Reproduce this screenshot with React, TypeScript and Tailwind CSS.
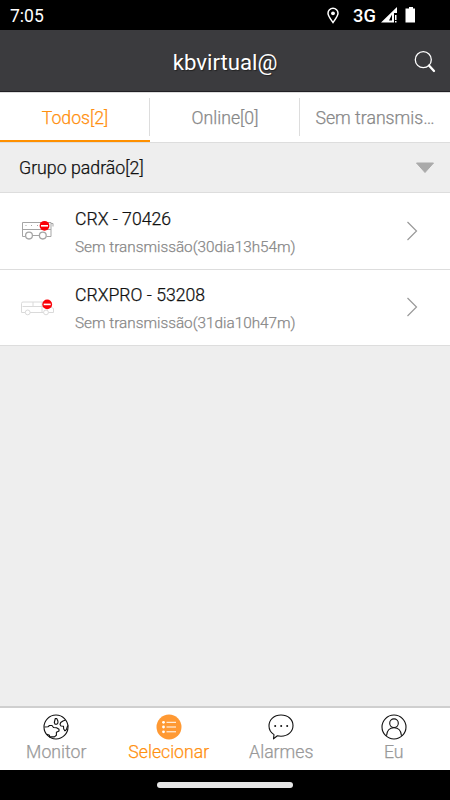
import React from 'react';

const NoEntry = ({ cx, cy }: { cx: number; cy: number }) => (
  <g stroke="none">
    <circle cx={cx} cy={cy} r="4.9" fill="#fa0008" />
    <rect x={cx - 3.5} y={cy - 0.8} width="7" height="1.6" fill="#fff" />
  </g>
);

const BusIcon = () => (
  <svg width="36" height="24" viewBox="0 0 36 24" fill="none" stroke="#a5a5a5">
    <path d="M5.500 17.500H2.500V3.500h28.500v14h-4.500M19.500 16.500H12.500M2.500 10.500h28.500M31 4.500h2v3" />
    <path d="M5.500 6.500h1M11 6.500h1M17 6.500h1" />
    <circle cx="9" cy="16.600" r="3.400" fill="#fff" strokeWidth="1.300" />
    <circle cx="22.800" cy="16.600" r="3.400" fill="#fff" strokeWidth="1.300" />
    <NoEntry cx={24.5} cy={6.8} />
  </svg>
);

const VanIcon = () => (
  <svg width="36" height="24" viewBox="0 0 36 24" fill="none" stroke="#dadada">
    <path d="M1.500 16.500V7.500q0-1.500 1.500-1.500H27l3.500 5 3 1.500v4H1.500zM2.500 10.500h26M13 6v4.500M22 6v10.500" />
    <circle cx="7.700" cy="16.400" r="2.400" fill="#fff" />
    <circle cx="26" cy="16.400" r="2.400" fill="#fff" />
    <NoEntry cx={27.2} cy={8.4} />
  </svg>
);

const devices = [
  { name: 'CRX - 70426', status: 'Sem transmissão(30dia13h54m)', icon: <BusIcon /> },
  { name: 'CRXPRO - 53208', status: 'Sem transmissão(31dia10h47m)', icon: <VanIcon /> },
];

const Globe = () => (
  <svg width="26" height="26" viewBox="0 0 26 26" fill="none" stroke="#111" strokeWidth="1.1" strokeLinejoin="round">
    <circle cx="13" cy="13" r="12" />
    <path d="M1.500 13l3.500-.3 1.500-1.200 2.500 0 1.500 2 3 .2 2.500 1.600v1.700l-2.600 1.300v3l-2 1.600H6.500v-1.600L4 20.300M12.300 4.500h1.400l1.200 2.500v2l-1 1.200h-1.800l-.8-1.700zM22.500 6l-2.500 1-2.300 1.500-.7 2 1 1.500 2.500.3.200 2.700 1.200 1.800 1.600-1.500.7-2.500 1-1.300" />
  </svg>
);

const ListCircle = () => (
  <svg width="26" height="26" viewBox="0 0 26 26">
    <circle cx="13" cy="13" r="12.500" fill="#ff9933" />
    <g fill="#fff">
      <circle cx="7.500" cy="8.300" r="1.400" />
      <circle cx="7.500" cy="13" r="1.400" />
      <circle cx="7.500" cy="17.800" r="1.400" />
    </g>
    <path d="M10.500 8.300h9.500M10.500 13h9.500M10.500 17.800h9.500" stroke="#fff" strokeWidth="1" />
  </svg>
);

const Bubble = () => (
  <svg width="26" height="26" viewBox="0 0 26 26" fill="none" stroke="#111" strokeWidth="1.1" strokeLinejoin="round">
    <path d="M6 20.600C2.700 18.500 1 15.500 1 12 1 5.500 6 1 13 1s12 4.500 12 10.600-5 10.600-12 10.600c-1.300 0-2.500-.1-3.600-.4L5.500 24.800z" />
    <g fill="#111" stroke="none">
      <circle cx="7.200" cy="12" r="1" />
      <circle cx="13.200" cy="12" r="1" />
      <circle cx="19.200" cy="12" r="1" />
    </g>
  </svg>
);

const Person = () => (
  <svg width="26" height="26" viewBox="0 0 26 26" fill="none" stroke="#111" strokeWidth="1.1">
    <circle cx="13" cy="13" r="12" />
    <circle cx="13" cy="9.200" r="4.300" />
    <path d="M5.500 21.800c.4-5 3.400-8 7.500-8s7.100 3 7.500 8" />
  </svg>
);

const nav = [
  { label: 'Monitor', icon: <Globe />, active: false },
  { label: 'Selecionar', icon: <ListCircle />, active: true },
  { label: 'Alarmes', icon: <Bubble />, active: false },
  { label: 'Eu', icon: <Person />, active: false },
];

export default function App() {
  return (
    <div className="flex h-[800px] w-[450px] flex-col overflow-hidden bg-[#eeeeee] font-['Roboto',sans-serif]">
      <div className="flex h-[30px] shrink-0 items-center justify-between bg-black pl-[10px] text-white">
        <span className="pt-px text-[17.5px] leading-[30px]">7:05</span>
        <div className="flex h-full items-center">
          <svg width="12" height="17" viewBox="0 0 12 17" fill="none" stroke="#fff" strokeWidth="1.500">
            <path d="M6 15.500C3.500 12 1 9 1 6.300a5 5 0 0 1 10 0C11 9 8.500 12 6 15.500z" />
            <circle cx="6" cy="6.300" r="1.900" fill="#fff" stroke="none" />
          </svg>
          <span className="ml-[14px] w-[27px] pt-px text-[18.3px] leading-[30px] font-medium">3G</span>
          <svg width="36" height="17" viewBox="0 0 36 17" fill="#fff" className="mr-[34px]">
            <path fillRule="evenodd" d="M1 15.500L17 0v6h-3v9.500zM9 13.500h3V7.500z" />
            <path d="M15 8h1.500v5H15zM15 14h1.500v1.500H15zM27 1.500h2V0h4v1.500h2v14H25.500v-14z" />
          </svg>
        </div>
      </div>

      <header className="grid h-[62px] shrink-0 grid-cols-[50px_1fr_50px] items-center border-b border-[#211f24] bg-[#3b3b3e] text-white">
        <h1 className="col-start-2 pt-[3px] text-center text-[22.2px] leading-[30px] [text-shadow:1px_1px_1px_#222]">kbvirtual@</h1>
        <svg width="22" height="22" viewBox="0 0 22 22" fill="none" stroke="#fff" className="ml-[14px] mt-[3px]">
          <circle cx="9.300" cy="8.700" r="8" strokeWidth="1.300" />
          <path d="M15 14.500l5 5.500" strokeWidth="2.300" strokeLinecap="round" />
        </svg>
      </header>

      <div className="grid h-[51px] shrink-0 grid-cols-3 grid-rows-[49px] border-t border-b border-[#dddddd] bg-white text-center text-[17.7px] leading-[51px] font-light text-[#888888] [-webkit-text-stroke:0.25px]">
        <div className="flex border-b-2 border-[#ff9000] text-[#ff9010]">
          <span className="flex-1 pl-px">Todos[2]</span>
          <i className="mt-[5px] h-[38px] w-px bg-[#dddddd]" />
        </div>
        <div className="flex">
          <span className="flex-1 pl-px">Online[0]</span>
          <i className="mt-[5px] h-[38px] w-px bg-[#dddddd]" />
        </div>
        <div>Sem transmis…</div>
      </div>

      <div className="flex h-[50px] shrink-0 items-center justify-between border-b border-[#dddddd] pl-[19px] pr-[15px] text-[17.75px] font-light text-[#111111] [-webkit-text-stroke:0.25px]">
        <span className="pt-px">Grupo padrão[2]</span>
        <svg width="20" height="12" viewBox="0 0 20 12">
          <path d="M1.500 1h17L10 10.500z" fill="#aaa" stroke="#aaa" strokeLinejoin="round" />
        </svg>
      </div>

      {devices.map((d, i) => (
        <div key={d.name} className={i === 0 ? 'flex h-[77px] shrink-0 items-center border-b border-[#dddddd] bg-white pl-5 pr-[32px]' : 'flex h-[76px] shrink-0 items-center border-b border-[#dddddd] bg-white pl-5 pr-[32px]'}>
          <div className="w-[55px]">{d.icon}</div>
          <div className={i === 0 ? 'flex flex-1 flex-col pt-[3px] font-light [-webkit-text-stroke:0.25px]' : 'flex flex-1 flex-col pt-[2px] font-light [-webkit-text-stroke:0.25px]'}>
            <span className="text-[17.65px] leading-[28px] text-[#111111]">{d.name}</span>
            <span className="text-[15.3px] leading-[28px] text-[#888888]">{d.status}</span>
          </div>
          <svg width="12" height="20" viewBox="0 0 12 20" fill="none" stroke="#999" strokeWidth="1.200" className="mb-px">
            <path d="M1.500 1l9 9-9 9" />
          </svg>
        </div>
      ))}

      <div className="flex-1" />

      <nav className="grid h-[64px] shrink-0 grid-cols-4 border-t-2 border-[#cfcfcf] bg-white">
        {nav.map((n) => (
          <div key={n.label} className="flex flex-col items-center pt-[6px] text-[17.7px] leading-6 font-light [-webkit-text-stroke:0.25px]">
            {n.icon}
            <span className={n.active ? 'text-[#ff9010]' : 'text-[#999999]'}>{n.label}</span>
          </div>
        ))}
      </nav>
      <div className="flex h-[30px] shrink-0 items-center justify-center bg-black">
        <div className="h-[6px] w-[136px] rounded-full bg-[#e6e6e6]" />
      </div>
    </div>
  );
}
